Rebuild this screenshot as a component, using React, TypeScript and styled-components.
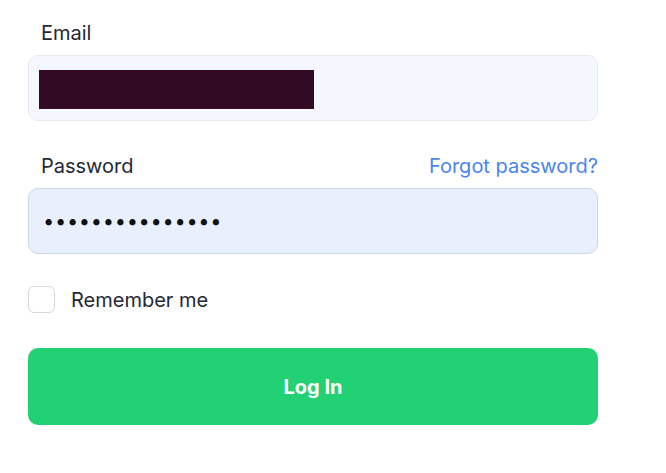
import React from 'react'
import styled, {createGlobalStyle} from 'styled-components'

const GlobalStyle = createGlobalStyle`
  html, body {
    margin: 0;
    background: #ffffff;
    font-family: Inter, "Liberation Sans", sans-serif;
  }
`

const Form = styled.form`
  width: 570px;
  padding: 21px 0 0 28px;
  display: flex;
  flex-direction: column;
`

const Group = styled.div<{$gap: number}>`
  display: flex;
  flex-direction: column;
  margin-bottom: ${({$gap}) => $gap}px;
`

const LabelRow = styled.div`
  display: flex;
  justify-content: space-between;
  align-items: center;
  padding-left: 13px;
  height: 24px;
  margin-bottom: 10px;
`

const Label = styled.label`
  font-size: 20px;
  color: #1f2937;
  line-height: 24px;
`

const ForgotLink = styled.a`
  font-size: 20px;
  color: #4b84ee;
  text-decoration: none;
  line-height: 24px;
`

const FieldWrap = styled.div`
  position: relative;
`

const Input = styled.input<{$filled?: boolean}>`
  box-sizing: border-box;
  width: 100%;
  height: 66px;
  padding: 0 14px;
  border-radius: 10px;
  border: 1px solid ${({$filled}) => ($filled ? '#cdd6e3' : '#e7ebf1')};
  background: ${({$filled}) => ($filled ? '#e8f0fe' : '#f4f7fe')};
  font-family: Inter, "Liberation Sans", sans-serif;
  font-size: 20px;
  letter-spacing: ${({$filled}) => ($filled ? '0.7px' : 'normal')};
  color: #111;
  outline: none;
`

const Redaction = styled.span`
  position: absolute;
  left: 11px;
  top: 15px;
  width: 275px;
  height: 39px;
  background: #330a24;
`

const CheckRow = styled.label`
  display: flex;
  align-items: center;
  gap: 16px;
  margin-bottom: 35px;
  font-size: 20px;
  color: #1f2937;
`

const Box = styled.span`
  box-sizing: border-box;
  width: 27px;
  height: 27px;
  border: 1px solid #d3d8df;
  border-radius: 6px;
  background: #fff;
`

const Button = styled.button`
  height: 77px;
  border: none;
  border-radius: 10px;
  background: #22d174;
  color: #fff;
  font-family: Inter, "Liberation Sans", sans-serif;
  font-size: 20px;
  font-weight: 700;
`

const App = () => {
  return (
    <>
      <GlobalStyle/>
      <Form onSubmit={e => e.preventDefault()}>
        <Group $gap={33}>
          <LabelRow>
            <Label htmlFor="email">Email</Label>
          </LabelRow>
          <FieldWrap>
            <Input id="email" type="email" defaultValue=""/>
            <Redaction/>
          </FieldWrap>
        </Group>
        <Group $gap={32}>
          <LabelRow>
            <Label htmlFor="password">Password</Label>
            <ForgotLink href="#">Forgot password?</ForgotLink>
          </LabelRow>
          <Input id="password" type="password" $filled defaultValue="abcdefghijklmno"/>
        </Group>
        <CheckRow>
          <Box/>
          Remember me
        </CheckRow>
        <Button type="submit">Log In</Button>
      </Form>
    </>
  )
}

export default App
